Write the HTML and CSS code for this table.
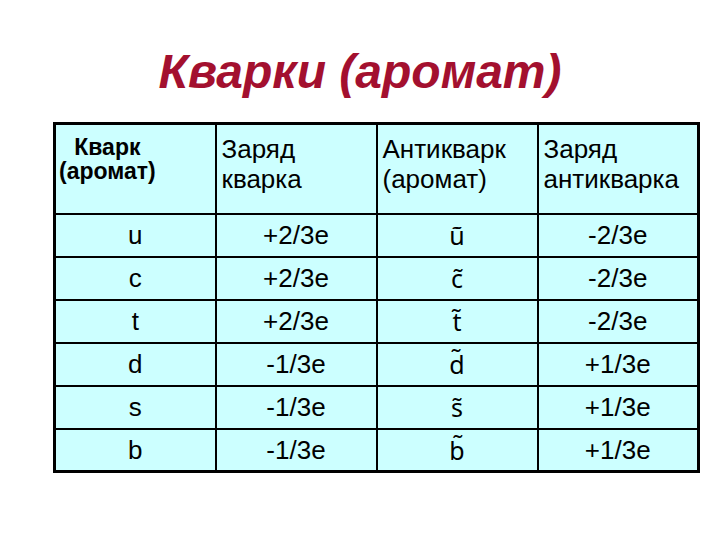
FILE: index.html
```html
<!DOCTYPE html>
<html lang="ru">
<head>
<meta charset="utf-8">
<link rel="stylesheet" href="styles.css">
</head>
<body>
<h1 class="title">Кварки (аромат)</h1>
<table class="quarks">
  <thead>
    <tr class="head">
      <th class="h-flavor"><span class="h-flavor-in">Кварк<br>(аромат)</span></th>
      <th class="h-text">Заряд<br>кварка</th>
      <th class="h-text">Антикварк<br>(аромат)</th>
      <th class="h-text">Заряд<br>антикварка</th>
    </tr>
  </thead>
  <tbody>
    <tr><td>u</td><td>+2/3e</td><td class="anti">ũ</td><td>-2/3e</td></tr>
    <tr><td>c</td><td>+2/3e</td><td class="anti">c̃</td><td>-2/3e</td></tr>
    <tr><td>t</td><td>+2/3e</td><td class="anti">t̃</td><td>-2/3e</td></tr>
    <tr><td>d</td><td>-1/3e</td><td class="anti">d̃</td><td>+1/3e</td></tr>
    <tr><td>s</td><td>-1/3e</td><td class="anti">s̃</td><td>+1/3e</td></tr>
    <tr><td>b</td><td>-1/3e</td><td class="anti">b̃</td><td>+1/3e</td></tr>
  </tbody>
</table>
</body>
</html>
```
FILE: styles.css
```css
html, body {
  margin: 0;
  padding: 0;
  background: #ffffff;
}
body {
  width: 720px;
  height: 540px;
  font-family: "Liberation Sans", Arial, sans-serif;
  color: #000;
}
.title {
  margin: 0;
  padding-top: 48px;
  height: 122px;
  box-sizing: border-box;
  font-size: 48px;
  line-height: 48px;
  font-weight: bold;
  font-style: italic;
  color: #a3102f;
  text-align: center;
}
.quarks {
  margin-left: 53px;
  width: 647px;
  border-collapse: collapse;
  table-layout: fixed;
  background: #ccffff;
  border: 3px solid #000;
}
.quarks th, .quarks td {
  border: 2px solid #000;
  padding: 0;
}
.quarks .head {
  height: 90px;
}
.quarks .h-flavor {
  vertical-align: top;
  text-align: left;
  font-size: 23px;
  line-height: 24px;
  font-weight: bold;
  padding: 10px 0 0 3px;
}
.h-flavor-in {
  display: inline-block;
  text-align: center;
}
.quarks .h-text {
  vertical-align: top;
  text-align: left;
  font-weight: normal;
  font-size: 26px;
  line-height: 30px;
  padding: 9px 0 0 5px;
}
.quarks td {
  height: 43px;
  box-sizing: border-box;
  text-align: center;
  font-size: 26px;
  line-height: 28px;
  vertical-align: middle;
}
.quarks .anti {
  font-family: "Noto Sans", "Liberation Sans", sans-serif;
  font-size: 25px;
}
```
